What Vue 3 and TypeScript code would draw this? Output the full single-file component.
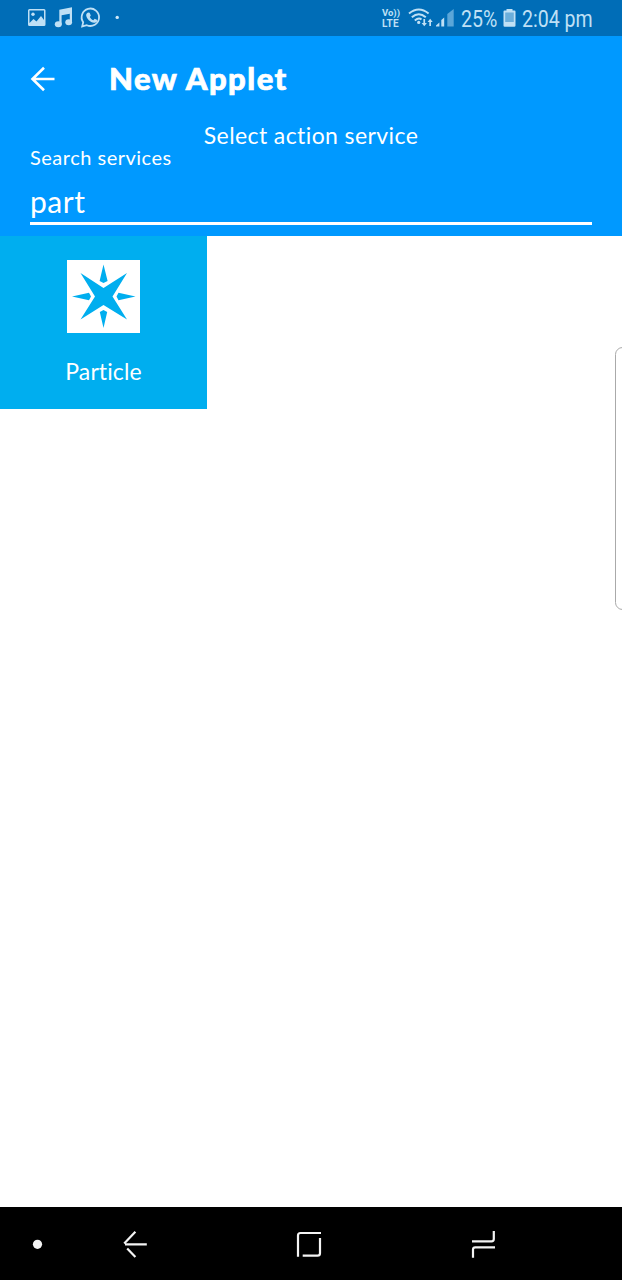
<script setup lang="ts">
import { ref } from 'vue'

interface Service {
  name: string
}

const query = ref<string>('part')
const services: Service[] = [{ name: 'Particle' }]
</script>

<template>
  <div class="screen">
    <div class="status">
      <svg class="status-left" width="130" height="36" viewBox="0 0 130 36">
        <path fill="#bfe0f5" fill-rule="evenodd" d="M29.500 9h14.500a1.500 1.500 0 0 1 1.500 1.500v14a1.500 1.500 0 0 1-1.500 1.500h-14.500a1.500 1.500 0 0 1-1.500-1.500v-14a1.500 1.500 0 0 1 1.500-1.500zM29.500 10.500v12.500l4-4 3 2.500 4.500-5.500 3 4v-9.500z" />
        <circle cx="33" cy="14.300" r="1.700" fill="#bfe0f5" />
        <path fill="#bfe0f5" d="M59.300 9.800l12.700-2.600v15h-2.200v-8.500l-8.200 1.500v9h-2.300z" />
        <ellipse cx="58.300" cy="24.200" rx="3.500" ry="3" fill="#bfe0f5" />
        <ellipse cx="68.700" cy="22.200" rx="3.400" ry="3" fill="#bfe0f5" />
        <path fill="none" stroke="#bfe0f5" stroke-width="1.800" d="M83.200 22.200A8.700 8.700 0 1 1 86.800 25.200L82.200 26.400z" />
        <path fill="#bfe0f5" d="M88.100 12.500l1.500.2 1.200 2.800-1 1.500c.8 1.600 1.900 2.500 3.500 3.200l1.400-1.400 2.600 1.300c.2 2-1.500 3-3.200 2.700-4.200-.8-7.300-4-7.900-7.400-.2-1.200.6-2.500 1.900-2.900z" />
        <circle cx="117.200" cy="17.400" r="1.700" fill="#cfe8f8" />
      </svg>
      <div class="status-right">
        <div class="volte"><span>Vo))</span><span class="lte">LTE</span></div>
        <svg class="signal" width="47" height="36" viewBox="408 0 47 36">
          <g fill="none" stroke="#bfe0f5" stroke-width="2">
            <path d="M409 13.500Q418.800 5.500 428.600 13.500" />
            <path d="M411.800 17.200Q418.800 11.300 425.800 17.200" />
            <path d="M414.800 20.500Q418.800 17.200 421.500 19.600" />
          </g>
          <circle cx="418.700" cy="22.400" r="1.600" fill="#bfe0f5" />
          <path fill="#bfe0f5" d="M423.400 19h1.700v4h1.800l-2.650 3.200-2.650-3.200h1.800zM429.300 26h1.700v-4h1.700l-2.550-3.200-2.550 3.200h1.700z" />
          <path fill="#bfe0f5" d="M436 26.500v-1l3.400-3v4zM441.300 26.500v-6.500l2.900-2.500v9z" />
          <path fill="#5ba6d8" d="M447.300 26.500v-12.500l6.400-5v17.500z" />
        </svg>
        <span class="percent">25%</span>
        <svg class="battery" width="13" height="36" viewBox="503 0 13 36">
          <path fill="#bfe0f5" d="M506.500 9h6v1.500h2a1 1 0 0 1 1 1v14a1.200 1.200 0 0 1-1.200 1.200h-9.600a1.200 1.200 0 0 1-1.200-1.200v-14a1 1 0 0 1 1-1h2z" />
          <path fill="#6baedb" d="M505.200 12.500h8.600v9.500h-8.600z" />
        </svg>
        <span class="clock">2:04 pm</span>
      </div>
    </div>

    <header class="header">
      <div class="toolbar">
        <svg class="back" width="26" height="26" viewBox="0 0 26 26">
          <path fill="none" stroke="#fff" stroke-width="2.600" d="M24.500 13H3M14 1.800L2.500 13 14 24.200" />
        </svg>
        <h1>New Applet</h1>
      </div>
      <p class="subtitle"><span>Select action service</span></p>
      <label class="label" for="search"><span>Search services</span></label>
      <input id="search" v-model="query" class="search" type="text" spellcheck="false" />
    </header>

    <main class="grid">
      <div v-for="service in services" :key="service.name" class="tile">
        <svg width="73" height="73" viewBox="0 0 73 73">
          <path fill="#fff" d="M0 0h73v73H0z" />
          <g fill="#00aeef">
            <path d="M13.500 13L36.500 28 60 13 45.500 36.500 60 59.500 36.500 45 13.500 59.500 28 36.500z" />
            <path d="M36.500 4.500L40.600 21 36.500 23 32.600 21zM36.500 68L40.200 52 36.500 50 32.800 52zM5 36.500L22 32.800 24 36.500 22 40.200zM68.500 36.500L51.500 32.800 49.500 36.500 51.500 40.200z" />
          </g>
        </svg>
        <span class="tile-name">{{ service.name }}</span>
      </div>
    </main>

    <div class="edge-handle"></div>

    <nav class="navbar">
      <svg width="622" height="73" viewBox="0 1207 622 73">
        <circle cx="37.500" cy="1244.300" r="4.600" fill="#f4f4f4" />
        <g fill="none" stroke="#f4f4f4" stroke-width="2.200">
          <path d="M146.800 1244.300H125M135.400 1231.800L124.200 1243.500M127.200 1248.500L135.400 1257" />
          <path d="M321 1233H300.500Q298 1233 298 1235.500V1256.700M302.700 1255.700H317.500Q320 1255.700 320 1253.200V1238" />
          <path d="M472 1241.300H491.500Q493.800 1241.300 493.800 1239V1231M495 1247.300H475.300Q473 1247.300 473 1249.600V1257.800" />
        </g>
      </svg>
    </nav>
  </div>
</template>

<style>
body {
  margin: 0;
}
</style>

<style scoped>
.screen {
  position: relative;
  display: flex;
  flex-direction: column;
  width: 622px;
  height: 1280px;
  overflow: hidden;
  background: #fff;
  color: #fff;
  font-family: Lato, "Open Sans", sans-serif;
}

.status {
  display: flex;
  justify-content: space-between;
  height: 36px;
  background: #006db7;
  color: #bfe0f5;
  font-family: Roboto, sans-serif;
}

.status svg {
  display: block;
}

.status-right {
  display: flex;
  width: 240px;
}

.volte {
  display: flex;
  flex-direction: column;
  width: 26px;
  padding-top: 7px;
  font-size: 9.5px;
  font-weight: 700;
  line-height: 11px;
}

.volte span {
  white-space: nowrap;
}

.volte .lte {
  font-size: 10px;
  line-height: 11px;
  letter-spacing: 0.2px;
}

.percent,
.clock {
  display: block;
  font-size: 23px;
  line-height: 39px;
  white-space: nowrap;
  transform: scaleX(0.85);
  transform-origin: 0 50%;
}

.percent {
  width: 42px;
  margin-left: 6px;
}

.clock {
  margin-left: 6px;
}

.header {
  display: flex;
  flex-direction: column;
  height: 200px;
  background: #0099ff;
}

.toolbar {
  display: flex;
  align-items: center;
  height: 86px;
}

.back {
  margin-left: 30px;
}

h1 {
  margin: 0 0 2px 53px;
  font-size: 31px;
  font-weight: 900;
  line-height: 40px;
  letter-spacing: 1.5px;
  -webkit-text-stroke: 0.7px #fff;
}

.subtitle {
  height: 26px;
  margin: 0;
  font-size: 23px;
  line-height: 26px;
  letter-spacing: 0.4px;
  text-align: center;
}

.label {
  height: 24px;
  margin-left: 30px;
  font-size: 20px;
  line-height: 18px;
  letter-spacing: 0.5px;
}

.search {
  box-sizing: border-box;
  width: 562px;
  height: 53px;
  margin: 0 30px;
  padding: 8px 0 0;
  border: 0;
  border-bottom: 3px solid #fff;
  outline: 0;
  background: transparent;
  color: #fff;
  font-family: inherit;
  font-size: 30px;
  letter-spacing: 0.5px;
}

.grid {
  display: grid;
  grid-template-columns: repeat(3, 207px);
  flex: 1;
  align-items: start;
}

.tile {
  display: flex;
  flex-direction: column;
  align-items: center;
  height: 149px;
  padding-top: 24px;
  background: #00aeef;
}

.tile-name {
  margin-top: 23px;
  font-size: 23px;
  line-height: 30px;
  letter-spacing: 0.1px;
}

.edge-handle {
  position: absolute;
  top: 347px;
  right: -8px;
  box-sizing: border-box;
  width: 15px;
  height: 263px;
  border: 1px solid #aaa;
  border-radius: 9px;
}

.navbar {
  height: 73px;
  background: #000;
}

.navbar svg {
  display: block;
}
</style>
